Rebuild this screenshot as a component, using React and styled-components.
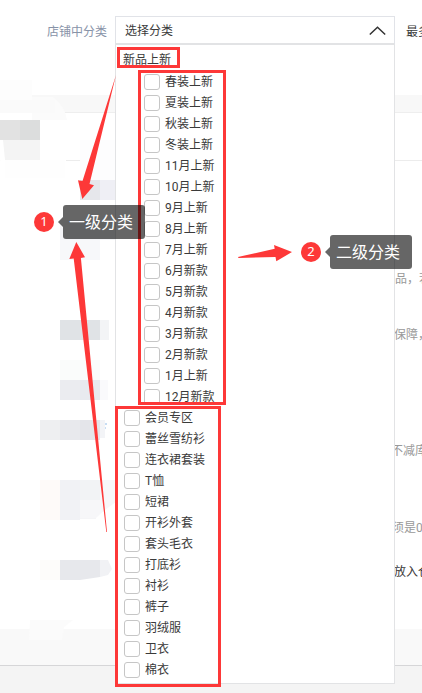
import React from "react";
import styled, { createGlobalStyle } from "styled-components";

const RED = "#fd3838";

const GlobalStyle = createGlobalStyle`
  * { box-sizing: border-box; }
  html, body { margin: 0; background: #fff; overflow: hidden; }
  body { font: 12px/21px Roboto, "Noto Sans CJK SC", sans-serif; color: #3a3a3a; }
`;

const Page = styled.main`
  position: relative;
  width: 422px;
  height: 693px;
  overflow: hidden;
  background: #fff;
`;

const Backdrop = styled.div`
  position: absolute;
  inset: 0;
  display: grid;
  grid-template-rows: 95px 18px 48px 468px 37px 1fr;
`;

const Band = styled.div`
  background: ${(p) => p.$fill || "#fff"};
  border-bottom: ${(p) => (p.$line ? `1px solid ${p.$line}` : "0")};
`;

const Smudges = styled.svg`
  position: absolute;
  inset: 0;
`;

const Form = styled.div`
  position: relative;
  display: grid;
  grid-template-columns: 115px 280px 27px;
  padding-top: 16px;
`;

const Label = styled.label`
  padding: 6px 8px 0 0;
  text-align: right;
  color: #8893a8;
`;

const Picker = styled.div`
  position: relative;
  z-index: 1;
`;

const SelectBox = styled.div`
  display: flex;
  align-items: center;
  justify-content: space-between;
  height: 29px;
  padding: 3px 8px 0 9px;
  border: 1px solid #e1e3e8;
  border-bottom: 2px solid #e2e3e5;
  background: #fff;

  svg {
    margin-bottom: 1px;
  }
`;

const Menu = styled.div`
  height: 639px;
  padding: 4px 8px 0;
  border: 1px solid #e2e3e5;
  border-top: 0;
  background: #fff;
`;

const GroupTitle = styled.div`
  height: 22px;
  margin-left: -1px;
  line-height: 23px;
`;

const Options = styled.ul`
  margin: 0;
  padding: 0 0 0 ${(p) => (p.$nested ? "20px" : "0")};
  list-style: none;
`;

const Option = styled.li`
  display: flex;
  align-items: center;
  gap: 5px;
  height: 21px;
`;

const OptionText = styled.span`
  white-space: nowrap;
  height: 21px;
  line-height: 22px;
`;

const Checkbox = styled.span`
  flex: none;
  width: 16px;
  height: 16px;
  border: 1px solid #c6c6c6;
  border-radius: 3px;
  background: #fff;
`;

const Hints = styled.div`
  display: flex;
  flex-direction: column;
  min-width: 0;
`;

const Hint = styled.span`
  height: 21px;
  margin: ${(p) => p.$gap}px 0 0 ${(p) => p.$shift || 0}px;
  color: ${(p) => (p.$dark ? "#3a3a3a" : "#999")};
  white-space: nowrap;
`;

const Frame = styled.div`
  position: absolute;
  z-index: 2;
  left: ${(p) => p.$x}px;
  top: ${(p) => p.$y}px;
  width: ${(p) => p.$w}px;
  height: ${(p) => p.$h}px;
  border: 3px solid ${RED};
`;

const Arrows = styled.svg`
  position: absolute;
  inset: 0;
  z-index: 3;
`;

const Callout = styled.div`
  position: absolute;
  z-index: 4;
  left: ${(p) => p.$x}px;
  top: ${(p) => p.$y}px;
  display: flex;
  align-items: center;
`;

const Badge = styled.span`
  width: 20px;
  height: 20px;
  margin-right: 4px;
  border-radius: 50%;
  background: ${RED};
  color: #fff;
  font: 13px/19px "Noto Sans", sans-serif;
  text-align: center;
`;

const Pointer = styled.span`
  border: 5px solid transparent;
  border-left: 0;
  border-right-color: rgba(0, 0, 0, 0.6);
`;

const Bubble = styled.span`
  width: 82px;
  height: 34px;
  padding-left: 6px;
  border-radius: 3px;
  background: rgba(0, 0, 0, 0.6);
  color: #fff;
  font: 16px/33px "Noto Sans CJK SC", sans-serif;
  white-space: nowrap;
`;

const secondLevel = [
  "春装上新", "夏装上新", "秋装上新", "冬装上新", "11月上新", "10月上新",
  "9月上新", "8月上新", "7月上新", "6月新款", "5月新款", "4月新款",
  "3月新款", "2月新款", "1月上新", "12月新款",
];

const firstLevel = [
  "会员专区", "蕾丝雪纺衫", "连衣裙套装", "T恤", "短裙", "开衫外套", "套头毛衣",
  "打底衫", "衬衫", "裤子", "羽绒服", "卫衣", "棉衣",
];

/* x, y, width, height, fill */
const blocks = [
  [0, 80, 32, 20, "#fdfdfd"], [0, 100, 55, 13, "#fafafa"],
  [0, 120, 20, 20, "#e2e2e2"], [20, 120, 20, 20, "#dcdddd"],
  [3, 140, 37, 20, "#f4f4f4"], [5, 160, 60, 18, "#fefefe"],
  [80, 140, 36, 40, "#fdfdfe"],
  [80, 180, 20, 20, "#e6e7eb"], [100, 180, 19, 20, "#efeff5"],
  [60, 220, 55, 20, "#f3f4f7"], [60, 240, 40, 20, "#f7f8fa"],
  [60, 320, 40, 20, "#e0e3e6"], [100, 320, 9, 20, "#f3f4f6"],
  [60, 360, 40, 20, "#fafcfb"],
  [60, 380, 20, 20, "#ebecf0"], [80, 380, 20, 20, "#e8eaef"], [100, 380, 8, 20, "#fafafc"],
  [40, 420, 20, 20, "#eeeff1"], [60, 420, 20, 20, "#e8e9ed"],
  [80, 420, 20, 20, "#e4e5ea"], [100, 420, 5, 18, "#f3f4f7"],
  [40, 480, 20, 40, "#fefaf9"], [60, 480, 20, 40, "#f1f2f5"],
  [80, 480, 20, 20, "#f2f3f5"], [80, 500, 16, 19, "#f5f5f7"],
  [40, 560, 20, 20, "#fdfcfa"], [60, 560, 20, 20, "#e7e8ec"],
];

const Rows = ({ items, nested }) => (
  <Options $nested={nested}>
    {items.map((name) => (
      <Option key={name}>
        <Checkbox />
        <OptionText>{name}</OptionText>
      </Option>
    ))}
  </Options>
);

const Note = ({ x, y, number, text }) => (
  <Callout $x={x} $y={y}>
    <Badge>{number}</Badge>
    <Pointer />
    <Bubble>{text}</Bubble>
  </Callout>
);

export default function App() {
  return (
    <>
      <GlobalStyle />
      <Page>
        <Backdrop>
          <Band />
          <Band $fill="#f8f8f8" $line="#eeeeee" />
          <Band $line="#ececec" />
          <Band />
          <Band $fill="#f9f9f9" $line="#d6d6d8" />
          <Band $fill="#f4f4f4" />
        </Backdrop>
        <Smudges width="422" height="693">
          <path d="M0 114H66V178H5L0 160Z" fill="#fff" />
          <path d="M32 97H53Q65 106 67 120H32Z" fill="#fbfbfb" />
          {blocks.map(([x, y, w, h, fill]) => (
            <rect key={`${x}-${y}`} x={x} y={y} width={w} height={h} fill={fill} />
          ))}
          <path d="M0 140H3L5 160H0Z" fill="#fff" />
          <path d="M100 480H117Q123 490 121 499Q107 507 96 518H80V500H100Z" fill="#f7f7f9" />
          <path d="M80 560H100V577L80 580Z" fill="#e7e8ec" />
          <path d="M100 560H108L112 569L108 575L100 577Z" fill="#f1f2f5" />
          <path d="M30 620H73L64 627L62 640H29Z" fill="#fbfbfb" />
          <path d="M105 424h2M105 428h1" stroke="#91bce8" />
        </Smudges>
        <Form>
          <Label>店铺中分类</Label>
          <Picker>
            <SelectBox>
              <span>选择分类</span>
              <svg width="17" height="10" viewBox="0 0 17 10" fill="none" stroke="#333" strokeWidth="1.5">
                <path d="M.8 8.5 8.5 1.2l7.7 7.3" />
              </svg>
            </SelectBox>
            <Menu>
              <GroupTitle>新品上新</GroupTitle>
              <Rows items={secondLevel} nested />
              <Rows items={firstLevel} />
            </Menu>
          </Picker>
          <Hints>
            <Hint $gap={6} $shift={11} $dark>最多</Hint>
            <Hint $gap={226}>品，若</Hint>
            <Hint $gap={35} $shift={-1}>保障，</Hint>
            <Hint $gap={95} $shift={-4}>不减库</Hint>
            <Hint $gap={56} $shift={-3}>须是0</Hint>
            <Hint $gap={23} $shift={-1} $dark>放入仓</Hint>
          </Hints>
        </Form>
        <Frame $x={117} $y={47} $w={63} $h={21} />
        <Frame $x={138} $y={70} $w={88} $h={335} />
        <Frame $x={115} $y={406} $w={106} $h={281} />
        <Arrows width="422" height="693" fill={RED}>
          <path d="M116 75 89.5 184 94 185.3 82.3 199 78 180.3 82.5 181Z" />
          <path d="M76.3 242 85 257.3 80.9 258 107 532H106.3L73.7 258.5 69.3 259Z" />
          <path d="M238 257 274.7 248.7 274 245 292 252 276.3 261.3 275.5 257 238.5 258Z" />
        </Arrows>
        <Note x={34} y={205} number="1" text="一级分类" />
        <Note x={301} y={235} number="2" text="二级分类" />
      </Page>
    </>
  );
}
